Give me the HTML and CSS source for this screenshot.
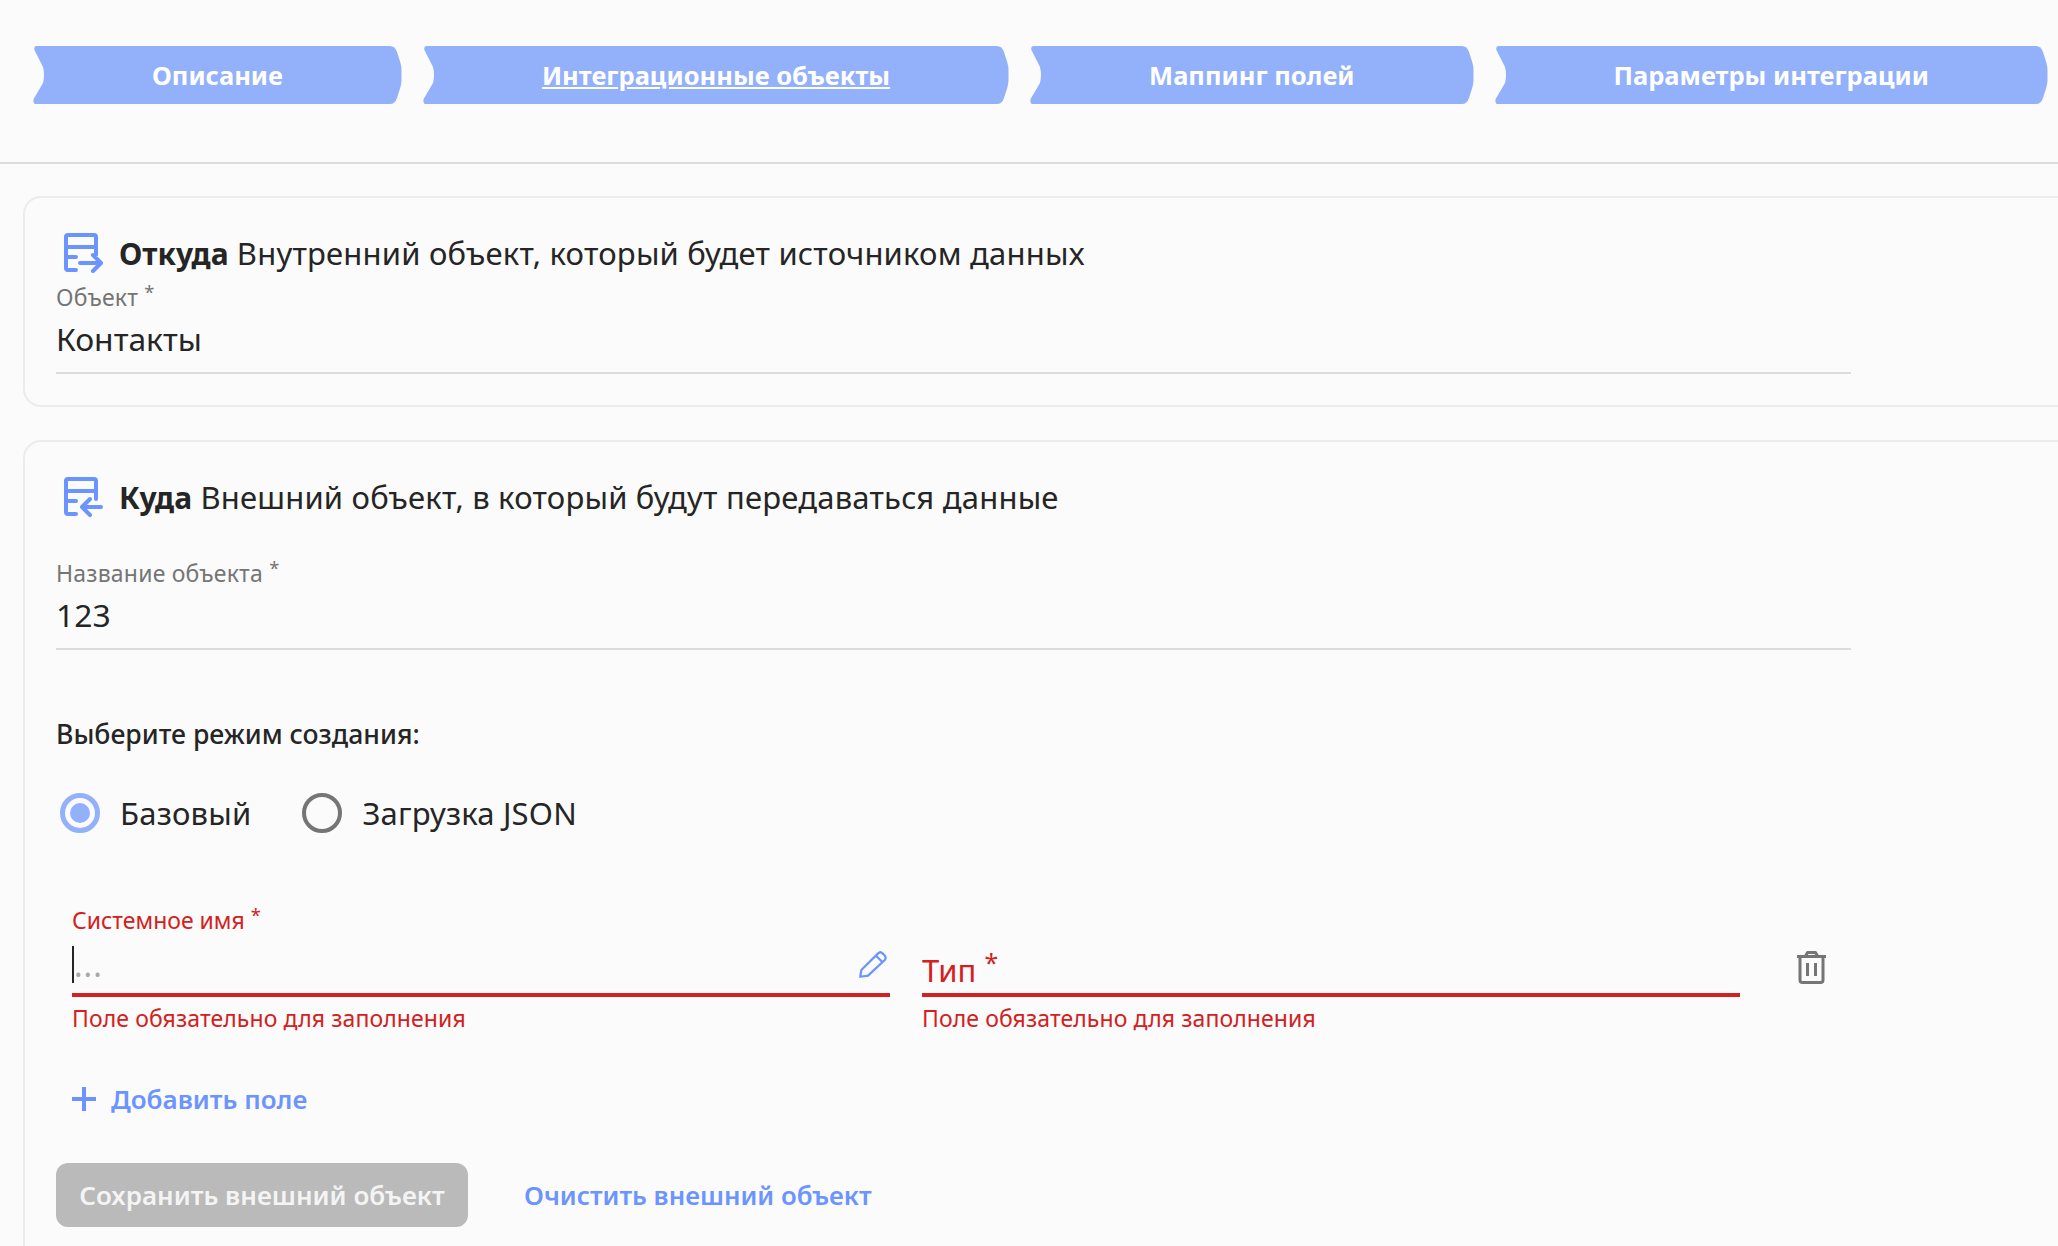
FILE: index.html
```html
<!DOCTYPE html>
<html lang="ru">
<head>
    <meta charset="UTF-8">
    <title>Интеграционные объекты</title>
    <link rel="stylesheet" href="styles.css">
</head>
<body>
    <!-- Steps -->
    <nav class="steps">
        <a class="step" href="#">
            <svg class="step-left" viewBox="0 0 14 58"><path d="M14 0H3.5Q.6 0 1.4 4L10 21Q12 29 10 37L.6 53Q-.3 58 3 58H14Z"/></svg>
            <span class="step-label">Описание</span>
            <svg class="step-right" viewBox="0 0 14 58"><path d="M0 0H2Q7 0 9 6L12.500 17Q13.500 21 13.500 24V34Q13.500 37 12.500 41L9 52Q7 58 2 58H0Z"/></svg>
        </a>
        <a class="step step-active" href="#">
            <svg class="step-left" viewBox="0 0 14 58"><path d="M14 0H3.5Q.6 0 1.4 4L10 21Q12 29 10 37L.6 53Q-.3 58 3 58H14Z"/></svg>
            <span class="step-label">Интеграционные объекты</span>
            <svg class="step-right" viewBox="0 0 14 58"><path d="M0 0H2Q7 0 9 6L12.500 17Q13.500 21 13.500 24V34Q13.500 37 12.500 41L9 52Q7 58 2 58H0Z"/></svg>
        </a>
        <a class="step" href="#">
            <svg class="step-left" viewBox="0 0 14 58"><path d="M14 0H3.5Q.6 0 1.4 4L10 21Q12 29 10 37L.6 53Q-.3 58 3 58H14Z"/></svg>
            <span class="step-label">Маппинг полей</span>
            <svg class="step-right" viewBox="0 0 14 58"><path d="M0 0H2Q7 0 9 6L12.500 17Q13.500 21 13.500 24V34Q13.500 37 12.500 41L9 52Q7 58 2 58H0Z"/></svg>
        </a>
        <a class="step" href="#">
            <svg class="step-left" viewBox="0 0 14 58"><path d="M14 0H3.5Q.6 0 1.4 4L10 21Q12 29 10 37L.6 53Q-.3 58 3 58H14Z"/></svg>
            <span class="step-label">Параметры интеграции</span>
            <svg class="step-right" viewBox="0 0 14 58"><path d="M0 0H2Q7 0 9 6L12.500 17Q13.500 21 13.500 24V34Q13.500 37 12.500 41L9 52Q7 58 2 58H0Z"/></svg>
        </a>
    </nav>

    <main class="content">
        <!-- Source -->
        <section class="card card-source">
            <h2 class="card-title">
                <svg class="card-icon" viewBox="0 0 40 40"><path d="M13 37H5Q3 37 3 35V4Q3 2 5 2H31Q33 2 33 4V22M3 14H33M3 24H13M17 30H37M30 22L38 30L30 38"/></svg>
                <span><b>Откуда</b> Внутренний объект, который будет источником данных</span>
            </h2>
            <div class="field">
                <label class="field-label">Объект <sup>*</sup></label>
                <input class="field-input" value="Контакты">
            </div>
        </section>

        <!-- Target -->
        <section class="card card-target">
            <h2 class="card-title">
                <svg class="card-icon" viewBox="0 0 40 40"><path d="M13 37H5Q3 37 3 35V4Q3 2 5 2H31Q33 2 33 4V22M3 14H33M3 24H13M19 30H38M27 22L19 30L27 38"/></svg>
                <span><b>Куда</b> Внешний объект, в который будут передаваться данные</span>
            </h2>
            <div class="field">
                <label class="field-label">Название объекта <sup>*</sup></label>
                <input class="field-input" value="123">
            </div>

            <p class="mode-title">Выберите режим создания:</p>
            <div class="mode-options">
                <label class="radio radio-checked"><span class="radio-mark"></span>Базовый</label>
                <label class="radio"><span class="radio-mark"></span>Загрузка JSON</label>
            </div>

            <div class="attr-row">
                <div class="attr-field">
                    <label class="attr-label">Системное имя <sup>*</sup></label>
                    <div class="attr-control">
                        <span class="caret"></span>
                        <input class="attr-input" placeholder="...">
                        <svg class="pencil" viewBox="0 0 26 26"><path d="M2 24L3 18L18 3Q20 1 22 3L24 5Q25.500 7 24 9L9 23ZM16 5L22 11"/></svg>
                    </div>
                    <div class="attr-error">Поле обязательно для заполнения</div>
                </div>
                <div class="attr-field attr-field-select">
                    <div class="attr-control">
                        <span class="attr-select">Тип <sup>*</sup></span>
                    </div>
                    <div class="attr-error">Поле обязательно для заполнения</div>
                </div>
                <svg class="trash" viewBox="0 0 31 34"><path d="M9.500 6L11.500 2.500H19.500L21.500 6M1 6.500H30M4 7V30Q4 32.500 6.500 32.500H24.500Q27 32.500 27 30V7M11.500 13V26M19.500 13V26"/></svg>
            </div>

            <a class="add-field" href="#">
                <svg class="plus" viewBox="0 0 24 24"><path d="M12 0V24M0 12H24"/></svg>
                Добавить поле
            </a>

            <div class="actions">
                <button class="btn-save" disabled>Сохранить внешний объект</button>
                <a class="btn-clear" href="#">Очистить внешний объект</a>
            </div>
        </section>
    </main>
</body>
</html>
```

FILE: styles.css
```css
:root {
    --blue: #6b94ff;
    --light-blue: #93b1fb;
    --red: #d32020;
    --text: #252525;
    --gray: #757575;
    --line: #dcdcdc;
    --font-family: 'Noto Sans', sans-serif;
}

html, body {
    height: 100%;
    overflow: hidden;
}

body {
    margin: 0;
    padding: 0;
    background-color: #fbfbfb;
    color: var(--text);
    font-family: var(--font-family);
}

/* Steps */
.steps {
    display: flex;
    gap: 21px;
    height: 164px;
    box-sizing: border-box;
    padding: 46px 0 0 33px;
    border-bottom: 2px solid var(--line);
}

.step {
    display: flex;
    height: 58px;
    color: white;
    font-size: 25.5px;
    font-weight: 700;
    text-decoration: none;
}

.step svg {
    flex: none;
    width: 14px;
    height: 58px;
    fill: var(--light-blue);
}

.step-left {
    margin-right: -1px;
}

.step-right {
    margin-left: -1px;
}

.step-label {
    display: flex;
    align-items: center;
    padding: 0 106px;
    background-color: var(--light-blue);
    white-space: nowrap;
}

.step-active .step-label {
    text-decoration: underline;
}

/* Cards */
.content {
    padding: 32px 0 0 23px;
}

.card {
    width: 2100px;
    box-sizing: border-box;
    border: 2px solid #ececec;
    border-radius: 18px;
    padding: 33px 0 40px 31px;
}

.card-source {
    height: 211px;
    margin-bottom: 33px;
}

.card-title {
    display: flex;
    align-items: center;
    gap: 16px;
    height: 44px;
    margin: 0;
    font-size: 31px;
    font-weight: 400;
    letter-spacing: 0.2px;
}

.card-title b {
    font-size: 30px;
    letter-spacing: 0;
}

.card-icon {
    flex: none;
    width: 40px;
    height: 40px;
    margin-left: 7px;
    fill: none;
    stroke: var(--blue);
    stroke-width: 4;
    stroke-linecap: round;
    stroke-linejoin: round;
}

.field {
    width: 1795px;
    margin-top: 6px;
    border-bottom: 2px solid var(--line);
}

.card-target .field {
    margin-top: 38px;
}

.field-label {
    display: block;
    height: 30px;
    line-height: 32px;
    font-size: 23px;
    letter-spacing: 0.2px;
    color: var(--gray);
}

sup {
    font-size: 0.8em;
    line-height: 0;
    vertical-align: 0.4em;
}

.field-input {
    display: block;
    width: 100%;
    height: 55px;
    margin-bottom: 6px;
    padding: 0;
    border: none;
    outline: none;
    background: transparent;
    color: var(--text);
    font-family: var(--font-family);
    font-size: 31.800px;
}

.mode-title {
    margin: 66px 0 0;
    line-height: 36px;
    font-size: 26.600px;
    font-weight: 500;
}

.mode-options {
    display: flex;
    gap: 51px;
    margin-top: 41px;
    margin-left: 4px;
}

.radio {
    display: flex;
    align-items: center;
    gap: 20px;
    height: 40px;
    font-size: 31px;
    letter-spacing: 0.2px;
}

.radio-mark {
    position: relative;
    width: 40px;
    height: 40px;
    box-sizing: border-box;
    border: 4px solid var(--gray);
    border-radius: 50%;
}

.radio-checked .radio-mark {
    border: 5px solid var(--light-blue);
}

.radio-checked .radio-mark::after {
    content: "";
    position: absolute;
    top: 5px;
    left: 5px;
    width: 20px;
    height: 20px;
    border-radius: 50%;
    background-color: var(--light-blue);
}

/* Attribute row */
.attr-row {
    display: flex;
    align-items: flex-start;
    gap: 32px;
    height: 129px;
    margin-top: 72px;
    margin-left: 16px;
}

.attr-field {
    flex: none;
    width: 818px;
    color: var(--red);
}

.attr-label {
    display: block;
    height: 30px;
    line-height: 30px;
    font-size: 23px;
}

.attr-field-select {
    padding-top: 30px;
}

.attr-control {
    display: flex;
    align-items: center;
    height: 62px;
    box-sizing: border-box;
    border-bottom: 4px solid var(--red);
}

.caret {
    flex: none;
    width: 2px;
    height: 37px;
    background-color: var(--text);
}

.attr-input {
    flex: 1;
    min-width: 0;
    padding: 0;
    border: none;
    outline: none;
    background: transparent;
    font-family: var(--font-family);
    font-size: 32px;
    letter-spacing: 1px;
}

.attr-input::placeholder {
    color: #a8a8a8;
}

.pencil {
    flex: none;
    width: 29px;
    height: 29px;
    margin-right: 3px;
    fill: none;
    stroke: var(--blue);
    stroke-width: 2;
    stroke-linejoin: round;
}

.attr-select {
    padding-top: 12px;
    font-size: 31px;
}

.attr-error {
    margin-top: 6px;
    line-height: 30px;
    font-size: 23px;
    letter-spacing: 0.1px;
}

.trash {
    flex: none;
    width: 31px;
    height: 34px;
    margin-top: 45px;
    margin-left: 24px;
    fill: none;
    stroke: var(--gray);
    stroke-width: 3;
    stroke-linejoin: round;
}

/* Bottom links */
.add-field {
    display: flex;
    align-items: center;
    gap: 15px;
    height: 40px;
    margin: 45px 0 0 16px;
    color: var(--blue);
    font-size: 26px;
    font-weight: 600;
    text-decoration: none;
}

.plus {
    width: 24px;
    height: 24px;
    fill: none;
    stroke: var(--blue);
    stroke-width: 4;
}

.actions {
    display: flex;
    align-items: center;
    gap: 56px;
    margin-top: 44px;
}

.btn-save {
    width: 412px;
    height: 64px;
    border: none;
    border-radius: 12px;
    background-color: #bababa;
    color: #f4f4f4;
    font-family: var(--font-family);
    font-size: 26px;
    font-weight: 600;
}

.btn-clear {
    color: var(--blue);
    font-size: 25.800px;
    font-weight: 600;
    text-decoration: none;
}
```
